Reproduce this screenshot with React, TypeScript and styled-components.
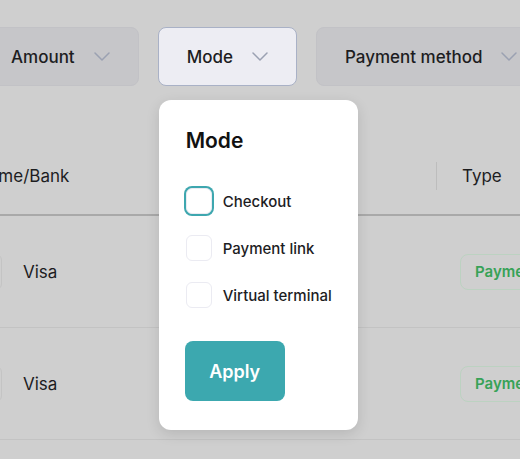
import React, { useState } from "react";
import styled, { createGlobalStyle } from "styled-components";

const GlobalStyle = createGlobalStyle`
  html, body {
    margin: 0;
    padding: 0;
    background: #cfcfcf;
    font-family: Inter, "Noto Sans", "Liberation Sans", sans-serif;
    color: #1d1d1f;
  }
  * { box-sizing: border-box; }
`;

const Page = styled.div`
  position: relative;
  width: 520px;
  height: 459px;
  overflow: hidden;
  background: #cfcfcf;
`;

const FilterBar = styled.div`
  display: flex;
  gap: 19px;
  margin-left: -18px;
  padding-top: 27px;
  white-space: nowrap;
`;

const FilterWrap = styled.div`
  position: relative;
  flex: 0 0 auto;
`;

const FilterButton = styled.button<{ $active?: boolean }>`
  display: flex;
  align-items: center;
  gap: 19px;
  height: 59px;
  padding: 0 28px;
  border-radius: 8px;
  border: 1px solid ${(p) => (p.$active ? "#a9b1c6" : "#c2c2c6")};
  background: ${(p) => (p.$active ? "#ededf3" : "#c6c6c9")};
  font-family: inherit;
  font-size: 17px;
  font-weight: 500;
  color: #1d1d1f;
  cursor: pointer;
`;

const Chevron = () => (
  <svg width="16" height="9" viewBox="0 0 16 9" fill="none">
    <path d="M1 1l7 7 7-7" stroke="#9ba1b2" strokeWidth="1.5" strokeLinecap="round" strokeLinejoin="round" />
  </svg>
);

const Popover = styled.div`
  position: absolute;
  top: 73px;
  left: 1px;
  width: 199px;
  padding: 27px 26px 29px 27px;
  background: #ffffff;
  border-radius: 12px;
  box-shadow: 0 4px 14px rgba(0, 0, 0, 0.12);
  z-index: 10;
`;

const PopTitle = styled.div`
  font-size: 21px;
  font-weight: 600;
  color: #111;
  line-height: 28px;
  margin-bottom: 33px;
`;

const OptionList = styled.div`
  display: flex;
  flex-direction: column;
  gap: 21px;
  margin-bottom: 33px;
`;

const Option = styled.label`
  display: flex;
  align-items: center;
  gap: 11px;
  font-size: 15px;
  font-weight: 500;
  color: #1d1d1f;
  cursor: pointer;
`;

const Box = styled.span<{ $focused?: boolean }>`
  flex: 0 0 auto;
  width: 26px;
  height: 26px;
  border-radius: 6px;
  border: 1px solid #ebebf2;
  background: #fff;
  box-shadow: ${(p) => (p.$focused ? "0 0 0 2px #3ea7af" : "none")};
`;

const ApplyButton = styled.button`
  width: 100px;
  height: 60px;
  border: none;
  border-radius: 8px;
  background: #3ca8af;
  color: #fff;
  font-family: inherit;
  font-size: 18px;
  font-weight: 600;
  margin-left: -1px;
  cursor: pointer;
`;

const Table = styled.div`
  margin-left: -40px;
  margin-top: 60px;
  width: 620px;
`;

const HeaderRow = styled.div`
  display: grid;
  grid-template-columns: 476px 1fr;
  align-items: center;
  height: 70px;
  padding-bottom: 9px;
  border-bottom: 2px solid #a9a9a9;
`;

const HeaderCell = styled.div<{ $divider?: boolean }>`
  font-size: 17px;
  font-weight: 400;
  color: #1d1d1f;
  padding-left: ${(p) => (p.$divider ? "25px" : "16px")};
  border-left: ${(p) => (p.$divider ? "1px solid #bdbdbd" : "none")};
  line-height: 28px;
`;

const Row = styled.div`
  display: grid;
  grid-template-columns: 476px 1fr;
  align-items: center;
  height: 112px;
  border-bottom: 1px solid #c3c3c3;
`;

const NameCell = styled.div`
  display: flex;
  align-items: center;
  gap: 21px;
  font-size: 17px;
  color: #1d1d1f;
`;

const CardLogo = styled.span`
  width: 42px;
  height: 36px;
  border-radius: 6px;
  border: 1px solid #c4c4c4;
`;

const TypeCell = styled.div`
  padding-left: 24px;
`;

const Badge = styled.span`
  display: inline-flex;
  align-items: center;
  height: 36px;
  padding: 0 14px;
  border: 1px solid #bcd2c1;
  border-radius: 8px;
  color: #37a257;
  font-size: 15px;
  font-weight: 600;
  white-space: nowrap;
`;

const modes = ["Checkout", "Payment link", "Virtual terminal"];

export default function App() {
  const [focused] = useState(0);
  return (
    <Page>
      <GlobalStyle />
      <FilterBar>
        <FilterWrap>
          <FilterButton>
            Amount <Chevron />
          </FilterButton>
        </FilterWrap>
        <FilterWrap>
          <FilterButton $active>
            Mode <Chevron />
          </FilterButton>
          <Popover>
            <PopTitle>Mode</PopTitle>
            <OptionList>
              {modes.map((m, i) => (
                <Option key={m}>
                  <Box $focused={i === focused} />
                  {m}
                </Option>
              ))}
            </OptionList>
            <ApplyButton>Apply</ApplyButton>
          </Popover>
        </FilterWrap>
        <FilterWrap>
          <FilterButton>
            Payment method <Chevron />
          </FilterButton>
        </FilterWrap>
      </FilterBar>
      <Table>
        <HeaderRow>
          <HeaderCell>Name/Bank</HeaderCell>
          <HeaderCell $divider>Type</HeaderCell>
        </HeaderRow>
        {[0, 1].map((i) => (
          <Row key={i}>
            <NameCell>
              <CardLogo />
              Visa
            </NameCell>
            <TypeCell>
              <Badge>Payment</Badge>
            </TypeCell>
          </Row>
        ))}
      </Table>
    </Page>
  );
}
